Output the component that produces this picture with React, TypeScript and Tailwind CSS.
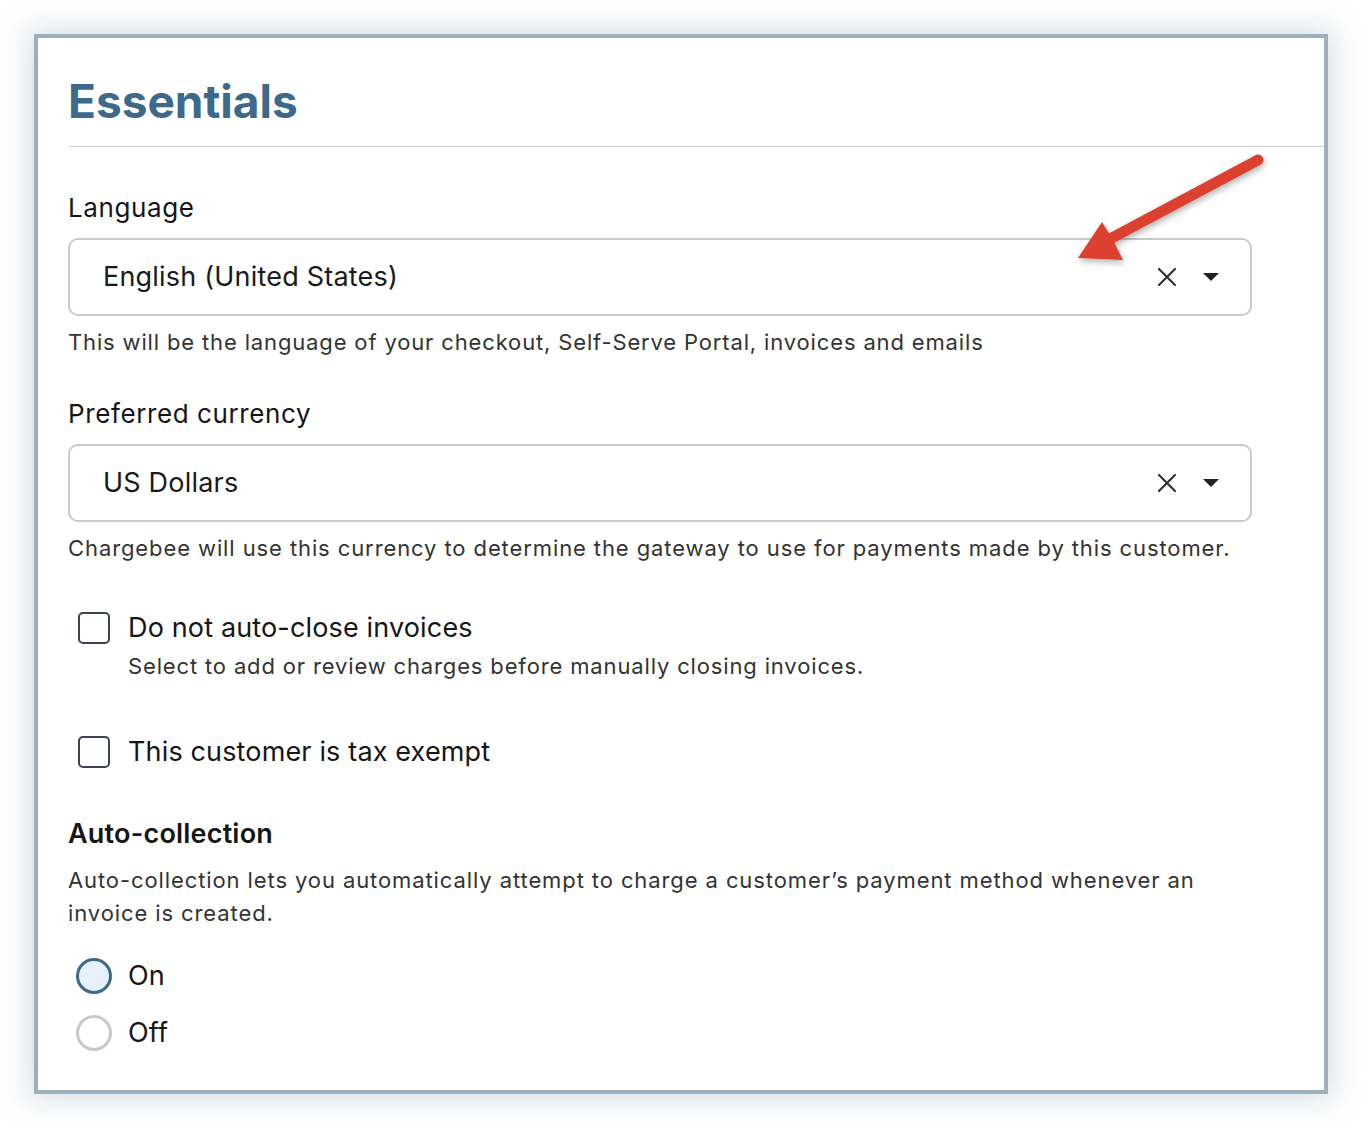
import React from 'react';

const font = { fontFamily: 'Inter, "Noto Sans", sans-serif' };

function SelectBox({ value }: { value: string }) {
  return (
    <div className="flex h-[78px] items-center rounded-[10px] border-2 border-[#c6cacf] pl-[33px] pr-[30px]">
      <span className="flex-1 text-[27px] tracking-[0.2px] text-[#1a1a1a]">{value}</span>
      <svg width="22" height="22" viewBox="0 0 22 22" className="mr-[24px]">
        <path d="M3 3 L19 19 M19 3 L3 19" stroke="#2e3339" strokeWidth="2.2" strokeLinecap="round" />
      </svg>
      <svg width="18" height="10" viewBox="0 0 18 10">
        <path d="M1 1 L17 1 L9 9 Z" fill="#1f2328" />
      </svg>
    </div>
  );
}

function Checkbox({ label, sub }: { label: string; sub?: string }) {
  return (
    <div className="flex pl-[10px]">
      <div className="mt-[1px] h-[32px] w-[32px] shrink-0 rounded-[5px] border-[2.5px] border-[#3b4450]" />
      <div className="ml-[18px]">
        <div className="text-[27px] leading-[34px] tracking-[0.15px] text-[#161616]">{label}</div>
        {sub && <div className="mt-[6px] text-[22px] leading-[30px] tracking-[0.85px] text-[#333]">{sub}</div>}
      </div>
    </div>
  );
}

function Radio({ label, checked }: { label: string; checked?: boolean }) {
  return (
    <div className="flex h-[36px] items-center pl-[8px]">
      <div
        className={`h-[36px] w-[36px] rounded-full border-[3px] ${
          checked ? 'border-[#3d6a8a] bg-[#e6f1fa]' : 'border-[#c5c8cf] bg-white'
        }`}
      />
      <span className="ml-[16px] text-[27px] tracking-[0.2px] text-[#161616]">{label}</span>
    </div>
  );
}

export default function App() {
  return (
    <div className="relative h-[1128px] w-[1362px] bg-white pl-[34px] pt-[34px]" style={font}>
      <div className="w-[1294px] border-4 border-[#9bb1bf] bg-white pb-[39px] shadow-[0_0_28px_6px_rgba(120,140,160,0.28)]">
        <div className="ml-[30px] border-b border-[#d2d2d2] pb-[17px] pt-[35px]">
          <h1 className="text-[46px] font-bold leading-[56px] text-[#3d6a8a]">Essentials</h1>
        </div>

        <div className="pl-[30px] pr-[72px]">
          <div className="mt-[45px] text-[26px] leading-[32px] tracking-[0.6px] text-[#161616]">Language</div>
          <div className="mt-[14px]">
            <SelectBox value="English (United States)" />
          </div>
          <p className="mt-[11px] text-[22px] leading-[30px] tracking-[0.85px] text-[#333]">
            This will be the language of your checkout, Self-Serve Portal, invoices and emails
          </p>

          <div className="mt-[41px] text-[26px] leading-[32px] tracking-[0.6px] text-[#161616]">Preferred currency</div>
          <div className="mt-[14px]">
            <SelectBox value="US Dollars" />
          </div>
          <p className="mt-[11px] text-[22px] leading-[30px] tracking-[0.9px] text-[#333]">
            Chargebee will use this currency to determine the gateway to use for payments made by this customer.
          </p>

          <div className="mt-[48px]">
            <Checkbox
              label="Do not auto-close invoices"
              sub="Select to add or review charges before manually closing invoices."
            />
          </div>
          <div className="mt-[54px]">
            <Checkbox label="This customer is tax exempt" />
          </div>

          <div className="mt-[49px] text-[27px] font-semibold leading-[32px] tracking-[0.2px] text-[#161616]">Auto-collection</div>
          <p className="mt-[14px] text-[22px] leading-[33px] tracking-[0.9px] text-[#333]">
            Auto-collection lets you automatically attempt to charge a customer’s payment method whenever an invoice is created.
          </p>

          <div className="mt-[28px] flex flex-col gap-[21px]">
            <Radio label="On" checked />
            <Radio label="Off" />
          </div>
        </div>
      </div>

      <svg className="absolute left-0 top-0" width="1362" height="1128" viewBox="0 0 1362 1128" style={{ pointerEvents: 'none' }}>
        <defs>
          <filter id="sh" x="-20%" y="-20%" width="140%" height="140%">
            <feDropShadow dx="1" dy="3" stdDeviation="3" floodColor="#000" floodOpacity="0.3" />
          </filter>
        </defs>
        <g filter="url(#sh)">
          <path d="M1258 160 L1108 240" stroke="#dc412f" strokeWidth="11" strokeLinecap="round" />
          <path d="M1078 258 L1102 222 L1112 238 L1123 260 Z" fill="#dc412f" />
        </g>
      </svg>
    </div>
  );
}
